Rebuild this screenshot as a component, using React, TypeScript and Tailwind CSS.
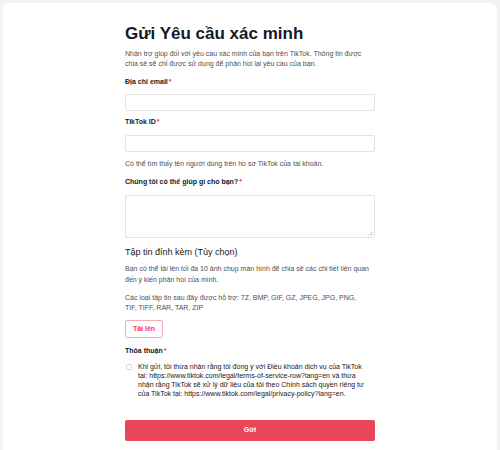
import React from "react";

const Req = () => <span className="text-[#fe2c55] ml-[1px]">*</span>;

export default function App() {
  return (
    <div className="w-[500px] h-[450px] bg-[#f1f3f3] pt-[3px] pl-[3px] pr-[3px] overflow-hidden" style={{ fontFamily: '"Liberation Sans", Arial, sans-serif' }}>
      <div className="bg-white rounded-tl-[6px] rounded-tr-[6px] h-full flex justify-center">
        <div className="w-[250px] pt-[21px] text-[#161823]">
          <h1 className="text-[17px] leading-[20px] font-bold">Gửi Yêu cầu xác minh</h1>
          <p className="mt-[5px] text-[7px] leading-[10px] text-[#4f4f4f]">
            Nhận trợ giúp đối với yêu cầu xác minh của bạn trên TikTok. Thông tin được chia sẻ sẽ chỉ được sử dụng để phản hồi lại yêu cầu của bạn.
          </p>
          <div className="mt-[8px] text-[7px] leading-[10px] font-bold">Địa chỉ email<Req /></div>
          <div className="mt-[7px] h-[17px] border border-[#e3e3e4] rounded-[2px]"></div>
          <div className="mt-[6px] text-[7px] leading-[10px] font-bold">TikTok ID<Req /></div>
          <div className="mt-[8px] h-[17px] border border-[#e3e3e4] rounded-[2px]"></div>
          <p className="mt-[7px] text-[7px] leading-[10px] text-[#4f4f4f]">Có thể tìm thấy tên người dùng trên hồ sơ TikTok của tài khoản.</p>
          <div className="mt-[8px] text-[7px] leading-[10px] font-bold">Chúng tôi có thể giúp gì cho bạn?<Req /></div>
          <div className="relative mt-[8px] h-[43px] border border-[#e3e3e4] rounded-[2px]">
            <svg className="absolute right-[1px] bottom-[1px]" width="5" height="5" viewBox="0 0 5 5">
              <path d="M4.5 1 L1 4.5 M4.5 3 L3 4.5" stroke="#999" strokeWidth="0.6" />
            </svg>
          </div>
          <div className="mt-[8px] text-[9px] leading-[12px] text-[#161823]">Tập tin đính kèm (Tùy chọn)</div>
          <p className="mt-[5px] text-[7px] leading-[11px] text-[#4f4f4f]">
            Bạn có thể tải lên tối đa 10 ảnh chụp màn hình để chia sẻ các chi tiết liên quan đến ý kiến phản hồi của mình.
          </p>
          <p className="mt-[8px] text-[7px] leading-[10px] text-[#4f4f4f] pr-[12px]">
            Các loại tập tin sau đây được hỗ trợ: 7Z, BMP, GIF, GZ, JPEG, JPG, PNG, TIF, TIFF, RAR, TAR, ZIP
          </p>
          <button className="mt-[7px] w-[38px] h-[18px] border border-[#f7a9b5] rounded-[2px] text-[7px] font-bold text-[#fe2c55] flex items-center justify-center">Tải lên</button>
          <div className="mt-[8px] text-[7px] leading-[10px] font-bold">Thỏa thuận<Req /></div>
          <div className="mt-[6px] flex items-start pr-[8px]">
            <div className="mt-[2px] ml-[1px] w-[6px] h-[6px] border border-[#d8d8d8] rounded-[1px] shrink-0"></div>
            <p className="ml-[6px] text-[7px] leading-[9px] text-[#161823]">
              Khi gửi, tôi thừa nhận rằng tôi đồng ý với Điều khoản dịch vụ của TikTok tại: https://www.tiktok.com/legal/terms-of-service-row?lang=en và thừa nhận rằng TikTok sẽ xử lý dữ liệu của tôi theo Chính sách quyền riêng tư của TikTok tại: https://www.tiktok.com/legal/privacy-policy?lang=en.
            </p>
          </div>
          <button className="mt-[22px] w-full h-[21px] rounded-[2px] bg-[#e9465a] text-white text-[7px] font-bold flex items-center justify-center">Gửi</button>
        </div>
      </div>
    </div>
  );
}
